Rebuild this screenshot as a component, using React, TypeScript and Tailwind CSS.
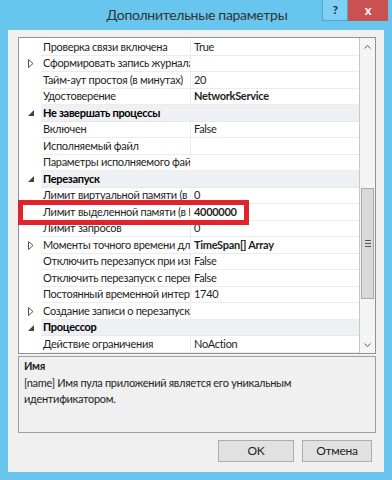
import React from "react";

type Row = {
  name: string;
  value?: string;
  bold?: boolean;
  category?: boolean;
  collapsed?: boolean;
};

const rows: Row[] = [
  {name: "Проверка связи включена", value: "True"},
  {name: "Сформировать запись журнала перезапуска", collapsed: true},
  {name: "Тайм-аут простоя (в минутах)", value: "20"},
  {name: "Удостоверение", value: "NetworkService", bold: true},
  {name: "Не завершать процессы", category: true},
  {name: "Включен", value: "False"},
  {name: "Исполняемый файл"},
  {name: "Параметры исполняемого файла"},
  {name: "Перезапуск", category: true},
  {name: "Лимит виртуальной памяти (в КБ)", value: "0"},
  {name: "Лимит выделенной памяти (в КБ)", value: "4000000", bold: true},
  {name: "Лимит запросов", value: "0"},
  {name: "Моменты точного времени для перезапуска", value: "TimeSpan[] Array", bold: true, collapsed: true},
  {name: "Отключить перезапуск при изменении конфигурации", value: "False"},
  {name: "Отключить перезапуск с перекрытием", value: "False"},
  {name: "Постоянный временной интервал (в минутах)", value: "1740"},
  {name: "Создание записи о перезапуске", collapsed: true},
  {name: "Процессор", category: true},
  {name: "Действие ограничения", value: "NoAction"},
];

function Collapsed() {
  return (
    <svg width="6" height="9" viewBox="0 0 6 9" className="text-[#555]">
      <path d="M0.5 0.5 L5 4.5 L0.5 8.5 Z" fill="none" stroke="currentColor" strokeWidth="1" />
    </svg>
  );
}

function Expanded() {
  return (
    <svg width="6" height="6" viewBox="0 0 6 6">
      <path d="M6 0 L6 6 L0 6 Z" fill="#444" />
    </svg>
  );
}

function GridRow({row}: {row: Row}) {
  return (
    <div className="flex h-[16.5px] items-stretch">
      <div className="w-[22px] shrink-0 flex items-center justify-center pl-[2px]">
        {row.category ? <Expanded /> : row.collapsed ? <Collapsed /> : null}
      </div>
      {row.category ? (
        <div className="flex-1 flex items-center bg-[#eef0f4] border-b border-[#e6e8ec] pl-[2px] font-bold text-black whitespace-nowrap overflow-hidden">
          {row.name}
        </div>
      ) : (
        <>
          <div className="w-[150px] shrink-0 flex items-center border-b border-r border-[#ececec] pl-[2px] whitespace-nowrap overflow-hidden">
            {row.name}
          </div>
          <div
            className={
              "flex-1 flex items-center border-b border-[#ececec] pl-[3px] whitespace-nowrap overflow-hidden " +
              (row.bold ? "font-bold" : "")
            }
          >
            {row.value}
          </div>
        </>
      )}
    </div>
  );
}

export default function App() {
  return (
    <div
      className="w-[392px] h-[480px] bg-[#68c6ee] flex flex-col px-2 pb-2 text-[11px] tracking-[-0.3px] text-[#1e1e1e] relative"
      style={{fontFamily: 'Lato, Roboto, sans-serif'}}
    >
      {/* title bar */}
      <div className="h-[30px] shrink-0 relative flex items-center justify-center">
        <span className="text-[14px] text-[#333] pb-[1px] pl-[2px]">Дополнительные параметры</span>
        <div className="absolute top-0 right-[36px] w-[26px] h-[21px] bg-[#7fd0f2] border border-[#4aa7d3] border-t-0 flex items-center justify-center text-[12px] font-bold text-[#1d2a3a]">
          ?
        </div>
        <div className="absolute top-0 -right-[4px] w-[40px] h-[21px] bg-[#c9514f] flex items-center justify-center text-white text-[13px] font-bold">
          x
        </div>
      </div>

      {/* dialog body */}
      <div className="flex-1 bg-[#f0f0f0] flex flex-col pl-[10px] pr-[8px] pt-[7px] pb-[10px]">
        <div className="h-[317px] shrink-0 border border-[#8f9296] bg-white flex">
          <div className="flex-1 flex flex-col pt-[1px] relative">
            {rows.map((r, i) => (
              <GridRow key={i} row={r} />
            ))}
          </div>
          {/* scrollbar */}
          <div className="w-[16px] shrink-0 border-l border-[#c8c8c8] bg-[#f4f4f4] flex flex-col">
            <div className="h-[17px] flex items-center justify-center">
              <svg width="7" height="4" viewBox="0 0 7 4">
                <path d="M0.5 3.5 L3.5 0.5 L6.5 3.5" fill="none" stroke="#555" strokeWidth="1" />
              </svg>
            </div>
            <div className="h-[133px]" />
            <div className="h-[111px] mx-[1px] bg-[#d9d9d9] border border-[#a8a8a8] flex items-center justify-center">
              <div className="flex flex-col gap-[2px]">
                <div className="w-[6px] h-px bg-[#555]" />
                <div className="w-[6px] h-px bg-[#555]" />
                <div className="w-[6px] h-px bg-[#555]" />
              </div>
            </div>
            <div className="flex-1" />
            <div className="h-[17px] flex items-center justify-center">
              <svg width="7" height="4" viewBox="0 0 7 4">
                <path d="M0.5 0.5 L3.5 3.5 L6.5 0.5" fill="none" stroke="#555" strokeWidth="1" />
              </svg>
            </div>
          </div>
        </div>

        {/* description */}
        <div className="mt-[2px] h-[77px] shrink-0 border border-[#a0a0a0] bg-[#f0f0f0] px-[5px] pt-[1px] leading-[16.5px]">
          <div className="font-bold">Имя</div>
          <div>[name] Имя пула приложений является его уникальным</div>
          <div>идентификатором.</div>
        </div>

        {/* buttons */}
        <div className="mt-[7px] flex justify-end gap-[8px] pr-[4px]">
          <button className="w-[76px] h-[22px] bg-[#e1e1e1] border border-[#adadad] text-[12px] text-[#1e1e1e]">
            OK
          </button>
          <button className="w-[70px] h-[22px] bg-[#e1e1e1] border border-[#adadad] text-[12px] text-[#1e1e1e]">
            Отмена
          </button>
        </div>
      </div>

      {/* red highlight annotation */}
      <div className="absolute left-[18px] top-[200px] w-[231px] h-[25px] border-[5px] border-[#e3232c]" />
    </div>
  );
}
